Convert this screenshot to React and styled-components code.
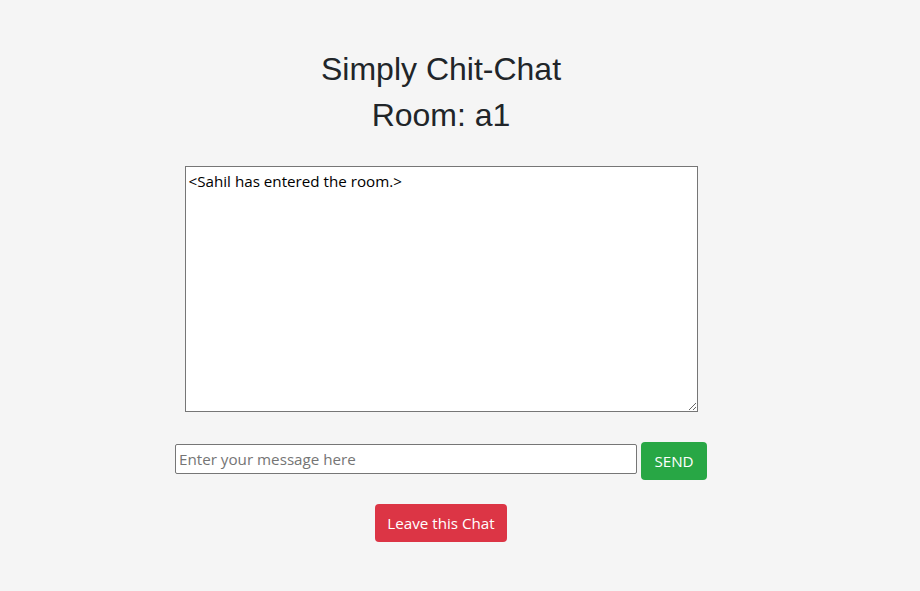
import styled, { createGlobalStyle } from 'styled-components';

const GlobalStyle = createGlobalStyle`
  html, body {
    margin: 0;
    padding: 0;
    background-color: #f5f5f5;
  }
  body {
    font-family: 'Open Sans', 'Noto Sans', sans-serif;
    color: #212529;
  }
`;

const Page = styled.div`
  width: 882px;
  padding-top: 46px;
  display: flex;
  flex-direction: column;
  align-items: center;
`;

const Title = styled.h1`
  margin: 0;
  font-family: 'Liberation Sans', Arial, sans-serif;
  font-weight: 400;
  font-size: 32px;
  line-height: 46px;
  color: #212529;
  text-align: center;
`;

const ChatLog = styled.textarea`
  box-sizing: border-box;
  width: 513px;
  height: 246px;
  margin-top: 28px;
  padding: 4px 3px;
  border: 1px solid #767676;
  background: #ffffff;
  font-family: 'Open Sans', 'Noto Sans', sans-serif;
  font-size: 15.2px;
  line-height: 20px;
  color: #000000;
  resize: both;
  outline: none;
`;

const MessageRow = styled.div`
  margin-top: 30px;
  display: flex;
  align-items: flex-start;
  gap: 4px;
`;

const MessageInput = styled.input`
  box-sizing: border-box;
  width: 462px;
  height: 30px;
  margin-top: 2px;
  padding: 1px 3px;
  border: 1px solid #767676;
  border-radius: 2px;
  background: #ffffff;
  font-family: 'Open Sans', 'Noto Sans', sans-serif;
  font-size: 15.2px;
  color: #000000;
  outline: none;

  &::placeholder {
    color: #757575;
  }
`;

const Button = styled.button`
  box-sizing: border-box;
  height: 38px;
  width: ${(p) => p.$width}px;
  padding: 0;
  border: none;
  border-radius: 4px;
  background-color: ${(p) => p.$color};
  color: #ffffff;
  font-family: 'Open Sans', 'Noto Sans', sans-serif;
  font-size: 15.2px;
  cursor: pointer;
`;

const LeaveWrap = styled.div`
  margin-top: 24px;
`;

function App() {
  return (
    <>
      <GlobalStyle />
      <Page>
        <Title>Simply Chit-Chat</Title>
        <Title>Room: a1</Title>
        <ChatLog readOnly value="<Sahil has entered the room.>" />
        <MessageRow>
          <MessageInput type="text" placeholder="Enter your message here" />
          <Button $color="#28a745" $width={66}>
            SEND
          </Button>
        </MessageRow>
        <LeaveWrap>
          <Button $color="#dc3545" $width={132}>
            Leave this Chat
          </Button>
        </LeaveWrap>
      </Page>
    </>
  );
}

export default App;
